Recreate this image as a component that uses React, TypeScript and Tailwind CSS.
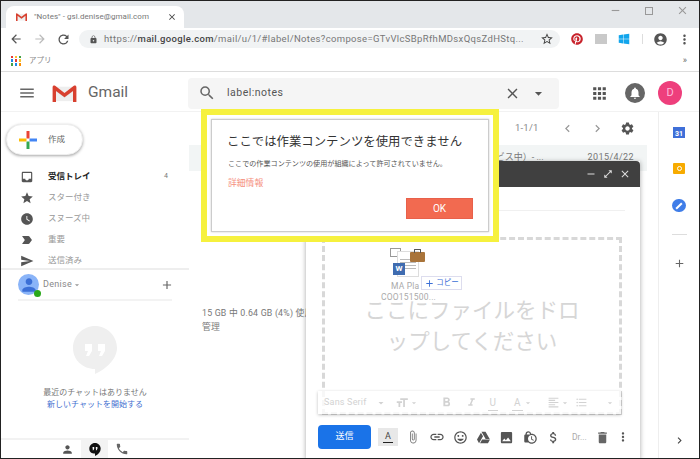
import {
  MdAdd,
  MdAccountCircle,
  MdApps,
  MdArrowBack,
  MdArrowDropDown,
  MdArrowForward,
  MdAttachFile,
  MdAttachMoney,
  MdChevronLeft,
  MdChevronRight,
  MdClose,
  MdDelete,
  MdFormatAlignLeft,
  MdFormatBold,
  MdFormatItalic,
  MdFormatListBulleted,
  MdFormatSize,
  MdInbox,
  MdInsertEmoticon,
  MdInsertPhoto,
  MdLabelImportant,
  MdLink,
  MdLock,
  MdLockClock,
  MdMenu,
  MdMoreVert,
  MdNotifications,
  MdOpenInFull,
  MdPerson,
  MdPhone,
  MdRefresh,
  MdRemove,
  MdSearch,
  MdSend,
  MdSettings,
  MdStar,
  MdStarBorder,
  MdWatchLater,
} from "react-icons/md";
import { FaGoogleDrive, FaPinterest, FaWindows } from "react-icons/fa";

const navItems = [
  { title: "受信トレイ", icon: MdInbox, count: "4", active: true },
  { title: "スター付き", icon: MdStar },
  { title: "スヌーズ中", icon: MdWatchLater },
  { title: "重要", icon: MdLabelImportant },
  { title: "送信済み", icon: MdSend },
];

function GmailLogo({ className }: { className: string }) {
  return (
    <svg viewBox="0 0 28 20" className={className}>
      <path d="M1 2h26v17H1z" fill="#eeeeee" />
      <path d="M1 2l13 10L27 2v3L14 15 1 5z" fill="#d9d9d9" />
      <path d="M0 2.500C0 1 1.500 0 3 1l11 8.500L25 1c1.500-1 3 0 3 1.500V20h-4V7l-10 7.500L4 7v13H0z" fill="#d8402f" />
    </svg>
  );
}

function ChromeBar() {
  return (
    <>
      <div className="flex h-[27px] shrink-0 items-end bg-[#e4e7ea] pl-[5px]">
        <div className="flex h-[22px] w-[178px] items-center rounded-t-lg bg-white pl-[10px] pr-[7px]">
          <GmailLogo className="h-[8px] w-[11px]" />
          <span className="ml-[7px] flex-1 text-[8px] tracking-[0.05px] text-[#777]">"Notes" - gsl.denise@gmail.com</span>
          <MdClose className="text-[10px] text-[#444]" />
        </div>
        <div className="ml-auto flex h-full items-start gap-[23px] pr-[10px] pt-[2px] text-[#999]">
          <MdRemove className="mt-[1px] text-[13px]" />
          <span className="mt-[4px] h-[8px] w-[8px] border border-[#999]" />
          <MdClose className="mt-[1px] text-[13px]" />
        </div>
      </div>
      <div className="flex h-[22px] shrink-0 items-center bg-white pl-[8px]">
        <MdArrowBack className="text-[14px] text-[#555]" />
        <MdArrowForward className="ml-[10px] text-[14px] text-[#bbb]" />
        <MdRefresh className="ml-[9px] text-[15px] text-[#555]" />
        <div className="ml-[8px] flex h-[18px] w-[481px] items-center rounded-full bg-[#f1f3f4] pl-[10px] pr-[6px]">
          <MdLock className="text-[9px] text-[#555]" />
          <span className="ml-[6px] flex-1 whitespace-nowrap text-[9.500px] tracking-[0.34px] text-[#777]">
            https://<span className="font-medium text-[#444]">mail.google.com</span>/mail/u/1/#label/Notes?compose=GTvVlcSBpRfhMDsxQqsZdHStq...
          </span>
          <MdStarBorder className="text-[14px] text-[#444]" />
        </div>
        <FaPinterest className="ml-[11px] text-[12px] text-[#c8232c]" />
        <span className="ml-[12px] h-[10px] w-[12px] bg-[#c9c9c9]" />
        <FaWindows className="ml-[11px] text-[12px] text-[#12a5ec]" />
        <span className="ml-[12px] h-[10px] w-px bg-[#ddd]" />
        <MdAccountCircle className="ml-[10px] text-[15px] text-[#555]" />
        <MdMoreVert className="ml-[9px] text-[15px] text-[#555]" />
      </div>
      <div className="flex h-[22px] shrink-0 items-center border-b border-[#ddd] bg-white pl-[10px] pr-[12px]">
        <div className="grid h-[10px] w-[10px] grid-cols-3 gap-[1.500px]">
          <i className="bg-[#e53935]" />
          <i className="bg-[#fbc02d]" />
          <i className="bg-[#43a047]" />
          <i className="bg-[#1e88e5]" />
          <i className="bg-[#e53935]" />
          <i className="bg-[#fbc02d]" />
          <i className="bg-[#43a047]" />
          <i className="bg-[#1e88e5]" />
          <i className="bg-[#fb8c00]" />
        </div>
        <span className="ml-[8px] text-[7.500px] text-[#888]">アプリ</span>
        <span className="ml-auto text-[9px] leading-none text-[#666]">»</span>
      </div>
    </>
  );
}

function GmailHeader() {
  return (
    <div className="flex h-[40px] shrink-0 items-center border-b border-[#f2f2f2] bg-white pt-[3px]">
      <MdMenu className="ml-[17px] text-[18px] text-[#666]" />
      <GmailLogo className="ml-[15px] h-[17px] w-[27px]" />
      <span className="ml-[10px] w-[100px] text-[15.500px] text-[#666]">Gmail</span>
      <div className="flex h-[31px] w-[371px] items-center rounded bg-[#f5f5f5] pl-[10px]">
        <MdSearch className="text-[18px] text-[#666]" />
        <span className="ml-[11px] text-[10.500px] tracking-[0.5px] text-[#555]">label:notes</span>
        <MdClose className="ml-[220px] text-[17px] text-[#555]" />
        <MdArrowDropDown className="ml-[9px] text-[17px] text-[#555]" />
      </div>
      <MdApps className="ml-[31px] text-[19px] text-[#555]" />
      <span className="ml-[16px] flex h-[20px] w-[20px] items-center justify-center rounded-full bg-[#666]">
        <MdNotifications className="text-[14px] text-white" />
      </span>
      <span className="ml-[13px] flex h-[24px] w-[24px] items-center justify-center rounded-full bg-[#ee3f7c] text-[11px] text-[#fbd]">
        D
      </span>
    </div>
  );
}

function Sidebar() {
  return (
    <aside className="flex w-[188px] shrink-0 flex-col bg-white">
      <div className="ml-[5px] mt-[12px] flex h-[31px] w-[77px] items-center rounded-full border border-[#eee] bg-white pl-[12px] shadow-[0_1px_3px_rgba(0,0,0,0.35)]">
        <svg viewBox="0 0 18 18" className="h-[18px] w-[18px]">
          <path d="M7.500 0h3v7.500h-3z" fill="#ea4335" />
          <path d="M10.500 7.500H18v3h-7.500z" fill="#4285f4" />
          <path d="M7.500 10.500h3V18h-3z" fill="#34a853" />
          <path d="M0 7.500h7.500v3H0z" fill="#fbbc05" />
        </svg>
        <span className="ml-[11px] text-[8.500px] text-[#666]">作成</span>
      </div>
      <nav className="mt-[11px] flex h-[102px] flex-col overflow-hidden">
        {navItems.map((item) => (
          <div key={item.title} className="flex h-[21px] shrink-0 items-center pl-[19px]">
            <item.icon className="text-[14px] text-[#555]" />
            <span className={item.active ? "ml-[14px] flex-1 text-[8.500px] font-bold text-[#222]" : "ml-[14px] flex-1 text-[8.500px] text-[#999]"}>
              {item.title}
            </span>
            {item.count && <span className="mr-[21px] text-[7px] text-[#777]">{item.count}</span>}
          </div>
        ))}
      </nav>
      <div className="h-[2px] bg-[#eee]" />
      <div className="flex h-[29px] items-center pl-[17px] pr-[15px]">
        <div className="relative flex h-[21px] w-[21px] items-center justify-center rounded-full bg-[#8ab4f8]">
          <MdPerson className="text-[20px] text-[#3b6fd6]" />
          <span className="absolute -bottom-[2px] -right-[2px] h-[7px] w-[7px] rounded-full bg-[#2aa81a]" />
        </div>
        <span className="ml-[4px] text-[9px] tracking-[0.3px] text-[#888]">Denise</span>
        <MdArrowDropDown className="text-[10px] text-[#999]" />
        <MdAdd className="ml-auto text-[14px] text-[#666]" />
      </div>
      <div className="mx-[17px] h-[2px] bg-[#f3f3f3]" />
      <div className="flex flex-1 flex-col items-center">
        <svg viewBox="0 0 44 48" className="mt-[25px] h-[48px] w-[44px]">
          <path d="M22 0C10 0 0 10 0 22s10 21 22 21v5c11-5 22-15 22-26C44 10 34 0 22 0z" fill="#efefef" />
          <path d="M12 18h7v7l-3 5h-3l2-5h-3zM25 18h7v7l-3 5h-3l2-5h-3z" fill="#fff" />
        </svg>
        <p className="mt-[13px] text-[8px] leading-[12px] text-[#777]">最近のチャットはありません</p>
        <p className="text-[8px] leading-[12px] text-[#3f6fd0]">新しいチャットを開始する</p>
      </div>
      <div className="flex h-[20px] items-center justify-center border-t-2 border-[#f2f2f2]">
        <MdPerson className="text-[13px] text-[#555]" />
        <span className="mx-[7px] flex h-full w-[27px] items-center justify-center bg-[#f3f3f3]">
          <svg viewBox="0 0 14 16" className="h-[13px] w-[12px]">
            <path d="M7 0C3 0 0 3 0 7s3 6 7 6v3c4-2 7-5 7-9 0-4-3-7-7-7z" fill="#111" />
            <path d="M4 5h2v2l-1 2H4l.5-2H4zM8 5h2v2l-1 2H8l.5-2H8z" fill="#fff" />
          </svg>
        </span>
        <MdPhone className="text-[14px] text-[#666]" />
      </div>
    </aside>
  );
}

function MainList() {
  return (
    <main className="flex min-w-0 flex-1 flex-col bg-white">
      <div className="flex h-[33px] items-center pl-[326px] text-[#888]">
        <span className="text-[9.500px] tracking-[0.2px]">1-1/1</span>
        <MdChevronLeft className="ml-[21px] text-[15px] text-[#999]" />
        <MdChevronRight className="ml-[15px] text-[15px] text-[#999]" />
        <MdSettings className="ml-[15px] text-[15px] text-[#555]" />
      </div>
      <div className="mr-[11px] flex h-[26px] items-center justify-end bg-[#f2f5f5] pr-[13px] text-[9px] text-[#777]">
        <span className="mr-[44px]">ービス中）- ...</span>
        <span className="tracking-[0.4px]">2015/4/22</span>
      </div>
      <div className="ml-[13px] mt-[135px] whitespace-nowrap text-[8.800px] leading-[14px] tracking-[0.2px] text-[#777]">
        <p>15 GB 中 0.64 GB (4%) 使用中</p>
        <p>管理</p>
      </div>
    </main>
  );
}

function RightRail() {
  return (
    <aside className="flex w-[41px] shrink-0 flex-col items-center border-l border-[#eee] bg-white">
      <div className="mt-[15px] flex h-[11px] w-[12px] items-end justify-center bg-[#3f6fd8] text-[7px] font-bold leading-[8px] text-white">
        31
      </div>
      <div className="mt-[25px] flex h-[11px] w-[12px] items-center justify-center rounded-[1px] bg-[#f7ab00]">
        <span className="h-[5px] w-[5px] rounded-full border border-white" />
      </div>
      <div className="mt-[25px] flex h-[13px] w-[14px] items-center justify-center rounded-full bg-[#3f7de8]">
        <span className="h-[2px] w-[8px] -rotate-45 bg-white" />
      </div>
      <div className="mt-[22px] h-px w-[15px] bg-[#ddd]" />
      <MdAdd className="mt-[22px] text-[13px] text-[#666]" />
      <MdChevronRight className="mt-auto mb-[11px] text-[13px] text-[#444]" />
    </aside>
  );
}

function ComposeWindow() {
  return (
    <div className="absolute left-[305px] top-[160px] flex h-[298px] w-[334px] flex-col bg-white shadow-[0_1px_5px_rgba(0,0,0,0.35)]">
      <div className="flex h-[26px] shrink-0 items-center justify-end gap-[6px] rounded-t bg-[#404040] pr-[9px] text-[#ddd]">
        <MdRemove className="text-[12px]" />
        <MdOpenInFull className="text-[10px]" />
        <MdClose className="text-[12px]" />
      </div>
      <div className="mx-[15px] h-[24px] border-b border-[#f0f0f0]" />
      <div className="relative ml-[16px] mr-[18px] mt-[26px] flex h-[178px] flex-col items-center border-[3px] border-dashed border-[#d8d8d8]">
        <p className="mt-[55px] w-[228px] text-center text-[21.500px] leading-[31px] text-[#d6d6d6]">
          ここにファイルをドロップしてください
        </p>
        <div className="absolute -left-[7px] -right-[2px] bottom-[-2px] flex h-[23px] items-center bg-white/80 pl-[6px] text-[#d2d2d2] shadow-[0_1px_3px_rgba(0,0,0,0.25)]">
          <span className="text-[9px] tracking-[0.2px]">Sans Serif</span>
          <MdArrowDropDown className="ml-[8px] text-[12px]" />
          <MdFormatSize className="ml-[8px] text-[14px]" />
          <MdArrowDropDown className="text-[10px]" />
          <MdFormatBold className="ml-[20px] text-[15px]" />
          <MdFormatItalic className="ml-[11px] text-[13px]" />
          <span className="ml-[10px] border-b border-[#d2d2d2] px-[2px] text-[10px]">U</span>
          <span className="ml-[14px] border-b border-[#d2d2d2] px-[2px] text-[10px]">A</span>
          <MdArrowDropDown className="text-[10px]" />
          <MdFormatAlignLeft className="ml-[14px] text-[13px]" />
          <MdArrowDropDown className="text-[10px]" />
          <MdFormatListBulleted className="ml-[5px] text-[13px]" />
          <MdArrowDropDown className="ml-[17px] text-[10px]" />
        </div>
      </div>
      <div className="mt-[10px] flex items-center pl-[12px]">
        <button className="h-[24px] w-[53px] rounded bg-[#1a73e8] text-[9px] text-white">送信</button>
        <span className="ml-[7px] flex h-[18px] w-[20px] flex-col items-center justify-center bg-[#e8e8e8]">
          <span className="border-b border-[#222] px-[2px] text-[9px] leading-[11px] text-[#444]">A</span>
        </span>
        <MdAttachFile className="ml-[8px] text-[14px] text-[#777]" />
        <MdLink className="ml-[9px] text-[16px] text-[#555]" />
        <MdInsertEmoticon className="ml-[8px] text-[15px] text-[#555]" />
        <FaGoogleDrive className="ml-[9px] text-[13px] text-[#555]" />
        <MdInsertPhoto className="ml-[9px] text-[15px] text-[#555]" />
        <MdLockClock className="ml-[9px] text-[15px] text-[#555]" />
        <MdAttachMoney className="ml-[8px] text-[15px] text-[#555]" />
        <span className="ml-[11px] text-[8.500px] text-[#aaa]">Dr...</span>
        <MdDelete className="ml-[8px] text-[15px] text-[#666]" />
        <MdMoreVert className="ml-[6px] text-[14px] text-[#555]" />
      </div>
    </div>
  );
}

function DragFile() {
  return (
    <div className="absolute left-[375px] top-[245px] flex w-[90px] flex-col items-start">
      <div className="relative ml-[14px] h-[33px] w-[36px]">
        <span className="absolute left-0 top-[2px] h-[9px] w-[11px] border border-[#999] bg-white" />
        <span className="absolute left-[7px] top-[5px] flex h-[26px] w-[22px] flex-col justify-center gap-[2px] border border-[#ddd] bg-white px-[2px]">
          <i className="h-px bg-[#bbb]" />
          <i className="h-px bg-[#bbb]" />
          <i className="h-px bg-[#bbb]" />
          <i className="h-px bg-[#bbb]" />
        </span>
        <span className="absolute left-[3px] top-[17px] flex h-[12px] w-[12px] items-center justify-center bg-[#3f6cb0] text-[8px] font-bold text-white">
          W
        </span>
        <span className="absolute left-[20px] top-[6px] h-[10px] w-[15px] rounded-[1px] bg-[#a9743a]" />
        <span className="absolute left-[24px] top-[3px] h-[4px] w-[7px] rounded-t-[1px] border border-b-0 border-[#555]" />
      </div>
      <p className="mt-[2px] text-[8.500px] leading-[11px] tracking-[0.2px] text-[#aaa]">
        <span className="ml-[15px] block">MA Pla</span>
        <span className="ml-[5px] block">COO151500...</span>
      </p>
      <span className="absolute left-[45px] top-[30px] flex h-[14px] w-[41px] items-center justify-center gap-[1px] border border-[#dde] bg-white text-[7.500px] text-[#3b6fd6]">
        <MdAdd className="text-[11px]" />
        コピー
      </span>
    </div>
  );
}

function BlockedDialog() {
  return (
    <div className="absolute left-[200px] top-[108px] h-[133px] w-[298px] border-[6px] border-[#f6f13e] bg-white p-[4px]">
      <div className="flex h-full flex-col border border-[#ccc] bg-white pl-[15px] pr-[15px] pt-[13px] shadow-[0_0_2px_rgba(0,0,0,0.2)]">
        <h1 className="whitespace-nowrap text-[12.400px] font-normal leading-[18px] text-[#333]">
          ここでは作業コンテンツを使用できません
        </h1>
        <p className="ml-[1px] mt-[7px] whitespace-nowrap text-[7.100px] leading-[11px] text-[#555]">
          ここでの作業コンテンツの使用が組織によって許可されていません。
        </p>
        <a className="ml-[1px] mt-[8px] text-[8.800px] leading-[12px] text-[#f58f80]">詳細情報</a>
        <button className="ml-auto mt-[9px] h-[21px] w-[67px] border border-[#e8604a] bg-[#f26a50] text-[10px] text-white">OK</button>
      </div>
    </div>
  );
}

export default function App() {
  return (
    <div className="relative flex h-[459px] w-[700px] flex-col overflow-hidden border border-[#222] bg-white font-['Roboto','Noto_Sans_CJK_JP',sans-serif]">
      <ChromeBar />
      <GmailHeader />
      <div className="flex min-h-0 flex-1">
        <Sidebar />
        <MainList />
        <RightRail />
      </div>
      <ComposeWindow />
      <DragFile />
      <BlockedDialog />
    </div>
  );
}
